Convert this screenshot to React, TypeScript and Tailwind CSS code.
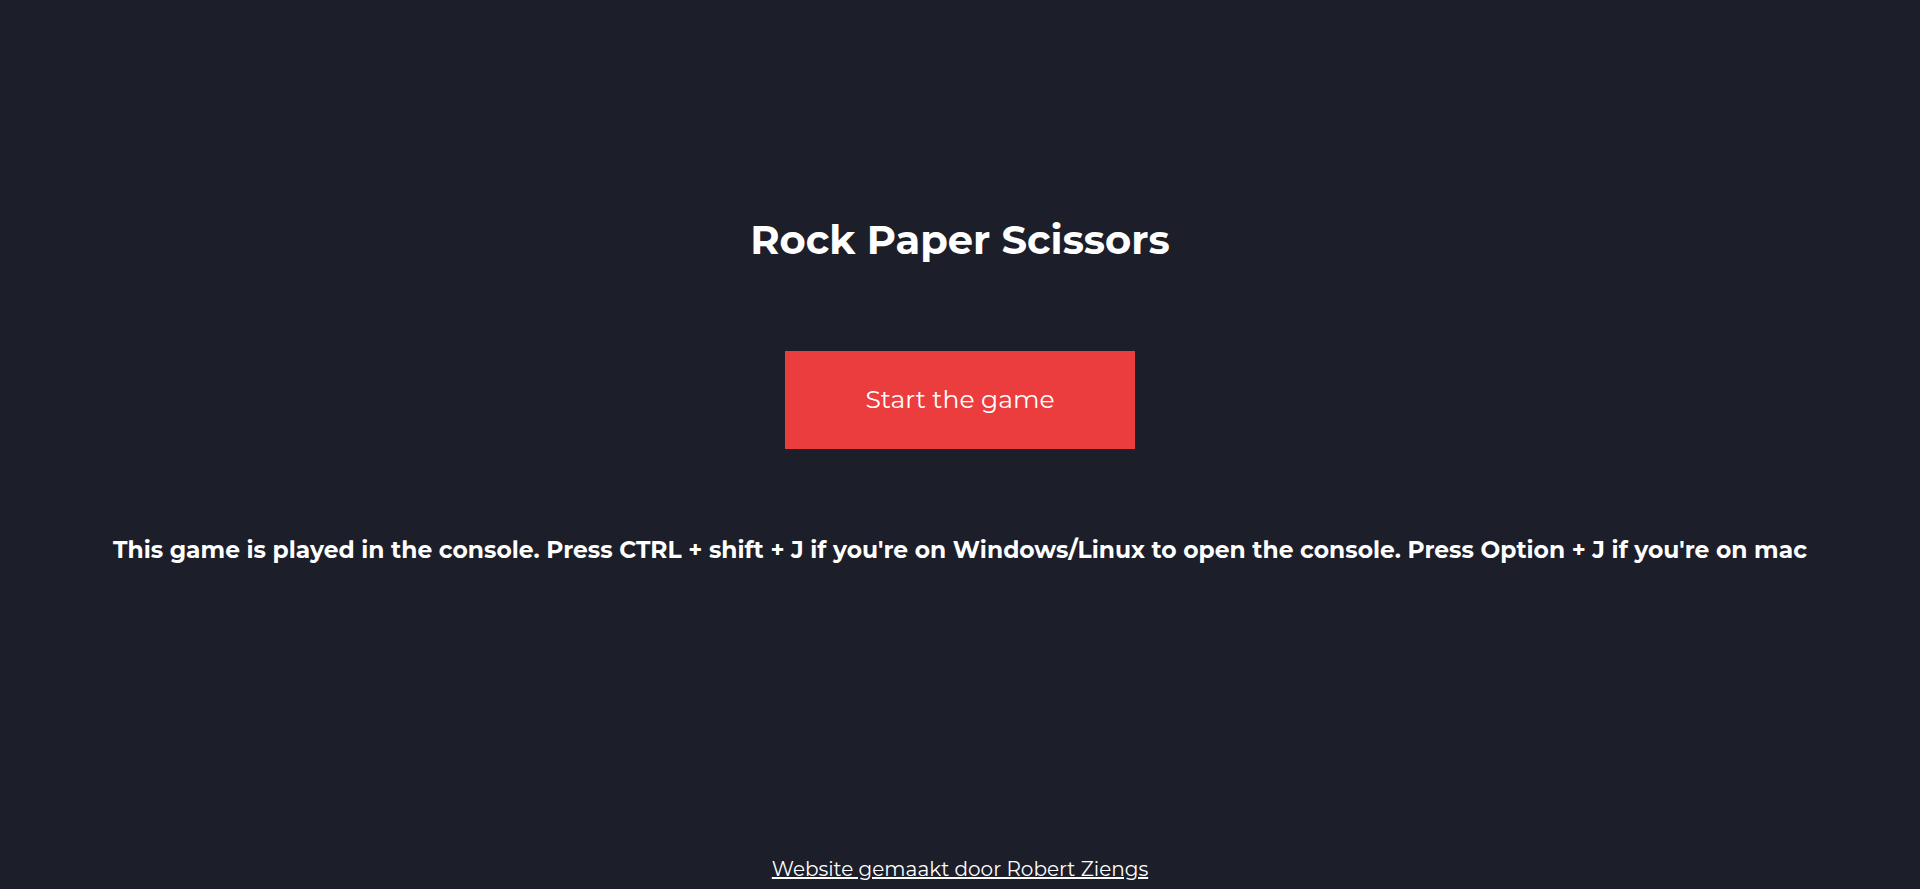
import React from 'react';

export default function App() {
  return (
    <div className="min-h-screen bg-[#1c1e29] text-white flex flex-col items-center font-['Montserrat','DejaVu_Sans',sans-serif]">
      <main className="flex flex-col items-center w-full">
        <h1 className="mt-[216px] text-[40px] leading-[48px] font-bold">Rock Paper Scissors</h1>

        <button className="mt-[87px] w-[350px] h-[98px] bg-[#eb3d3d] text-[25px] font-normal text-white">
          Start the game
        </button>

        <p className="mt-[87px] text-[23.4px] leading-[28px] font-bold text-center">
          This game is played in the console. Press CTRL + shift + J if you're on Windows/Linux to open the console. Press Option + J if you're on mac
        </p>
      </main>

      <footer className="mt-auto pb-[6px]">
        <a href="#" className="text-[20px] leading-[26px] underline">
          Website gemaakt door Robert Ziengs
        </a>
      </footer>
    </div>
  );
}
